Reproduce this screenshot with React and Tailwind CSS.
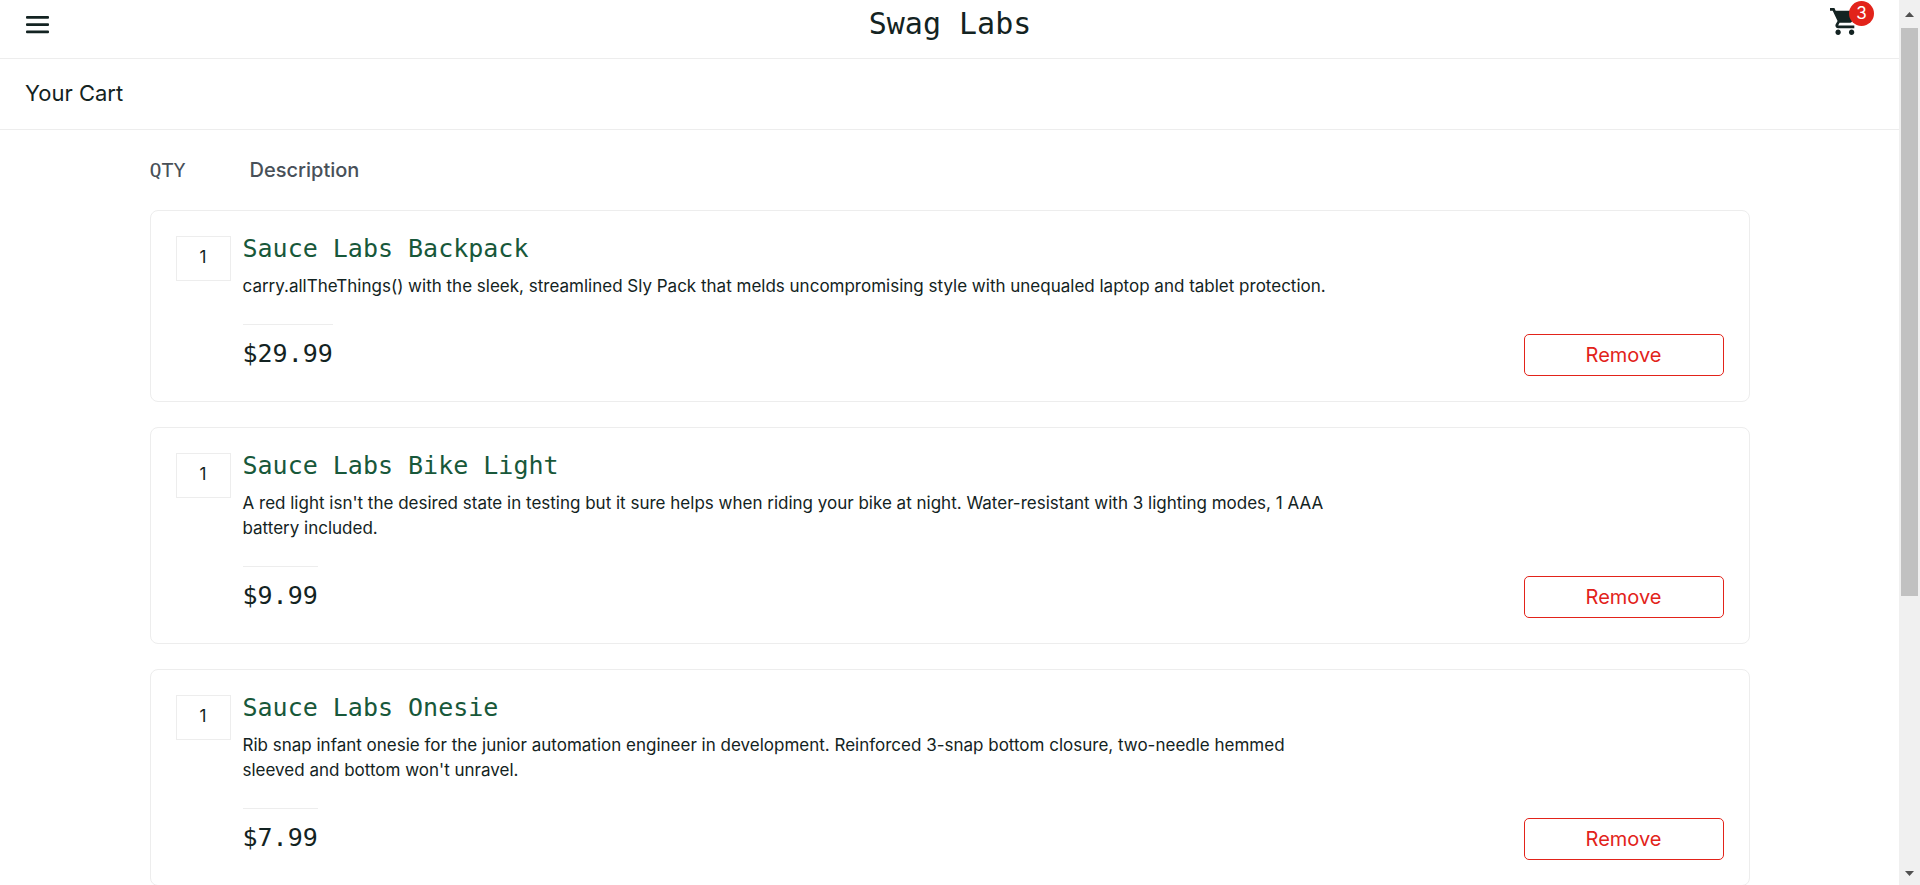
const items = [
  {
    name: "Sauce Labs Backpack",
    description:
      "carry.allTheThings() with the sleek, streamlined Sly Pack that melds uncompromising style with unequaled laptop and tablet protection.",
    price: "$29.99",
  },
  {
    name: "Sauce Labs Bike Light",
    description:
      "A red light isn't the desired state in testing but it sure helps when riding your bike at night. Water-resistant with 3 lighting modes, 1 AAA battery included.",
    price: "$9.99",
  },
  {
    name: "Sauce Labs Onesie",
    description:
      "Rib snap infant onesie for the junior automation engineer in development. Reinforced 3-snap bottom closure, two-needle hemmed sleeved and bottom won't unravel.",
    price: "$7.99",
  },
];

function Header() {
  return (
    <header className="flex h-[59px] items-start justify-between border-b border-[#ededed] pl-[26px] pr-[25px]">
      <button type="button" aria-label="Open Menu" className="mt-4 w-[100px]">
        <svg width="23" height="18" viewBox="0 0 23 18" fill="#132322" aria-hidden="true">
          <rect width="23" height="2.8" rx="1" />
          <rect y="7.2" width="23" height="2.8" rx="1" />
          <rect y="14.4" width="23" height="2.8" rx="1" />
        </svg>
      </button>
      <div className="font-['DejaVu_Sans_Mono',monospace] text-[30px] leading-[48px]">Swag Labs</div>
      <div className="flex w-[100px] justify-end">
        <a href="#cart" aria-label="Cart, 3 items" className="relative block h-10 w-11">
          <svg
            className="absolute left-0 top-2"
            width="27"
            height="27"
            viewBox="1 2 20 20"
            fill="#132322"
            aria-hidden="true"
          >
            <path d="M7 18c-1.1 0-1.99.9-1.99 2S5.9 22 7 22s2-.9 2-2-.9-2-2-2zM1 2v2h2l3.6 7.59-1.35 2.45c-.16.28-.25.61-.25.96 0 1.1.9 2 2 2h12v-2H7.42c-.14 0-.25-.11-.25-.25l.03-.12.9-1.63h7.45c.75 0 1.41-.41 1.75-1.03l3.58-6.49A1.003 1.003 0 0 0 20 4H5.21l-.94-2H1zm16 16c-1.1 0-1.99.9-1.99 2s.89 2 1.99 2 2-.9 2-2-.9-2-2-2z" />
          </svg>
          <span className="absolute right-0 top-px flex size-[25px] items-center justify-center rounded-full bg-[#e2231a] text-[17px] text-white">
            3
          </span>
        </a>
      </div>
    </header>
  );
}

function CartItem({ item }) {
  return (
    <li className="flex gap-3 rounded-[8px] border border-[#ededed] p-[25px]">
      <div className="flex h-[45px] w-[55px] shrink-0 items-center justify-center border border-[#ededed] pb-0.5 text-[17px]">
        1
      </div>
      <div className="flex-1">
        <a
          href="#item"
          className="block font-['DejaVu_Sans_Mono',monospace] text-[25px] leading-[25px] text-[#18583a]"
        >
          {item.name}
        </a>
        <p className="mt-[13px] w-[74%] text-[17px] leading-[25px]">{item.description}</p>
        <div className="mt-[25px] flex items-start justify-between">
          <div className="border-t border-[#ededed] pt-[14px] font-['DejaVu_Sans_Mono',monospace] text-[25px] leading-[30px]">
            {item.price}
          </div>
          <button
            type="button"
            className="mt-[10px] h-[42px] w-[200px] rounded-[5px] border border-[#e2231a] text-[20px] text-[#e2231a]"
          >
            Remove
          </button>
        </div>
      </div>
    </li>
  );
}

function Scrollbar() {
  return (
    <div className="flex w-[21px] shrink-0 flex-col bg-[#f0f0f0]" aria-hidden="true">
      <div className="flex h-7 items-center justify-center">
        <svg width="9" height="5" viewBox="0 0 9 5" fill="#505050">
          <path d="M0 5 4.500 0 9 5z" />
        </svg>
      </div>
      <div className="flex flex-1 flex-col px-[2px]">
        <div className="h-15/22 bg-[#c1c1c1]" />
      </div>
      <div className="flex h-6 items-center justify-center">
        <svg width="9" height="5" viewBox="0 0 9 5" fill="#505050">
          <path d="M0 0h9L4.500 5z" />
        </svg>
      </div>
    </div>
  );
}

export default function App() {
  return (
    <div className="flex h-screen overflow-hidden bg-white font-['Inter',sans-serif] text-[#132322]">
      <div className="min-w-0 flex-1">
        <Header />
        <div className="flex h-[71px] items-center border-b border-[#ededed] px-[25px] pb-0.5">
          <h1 className="text-[22px]">Your Cart</h1>
        </div>
        <main className="mx-auto max-w-[1600px] pt-[25px]">
          <div className="mb-[25px] flex text-[20px] leading-[30px] text-[#485058]">
            <div className="w-[100px] font-['DejaVu_Sans_Mono',monospace]">QTY</div>
            <div className="font-medium">Description</div>
          </div>
          <ul className="flex flex-col gap-[25px]">
            {items.map((item) => (
              <CartItem key={item.name} item={item} />
            ))}
          </ul>
        </main>
      </div>
      <Scrollbar />
    </div>
  );
}
